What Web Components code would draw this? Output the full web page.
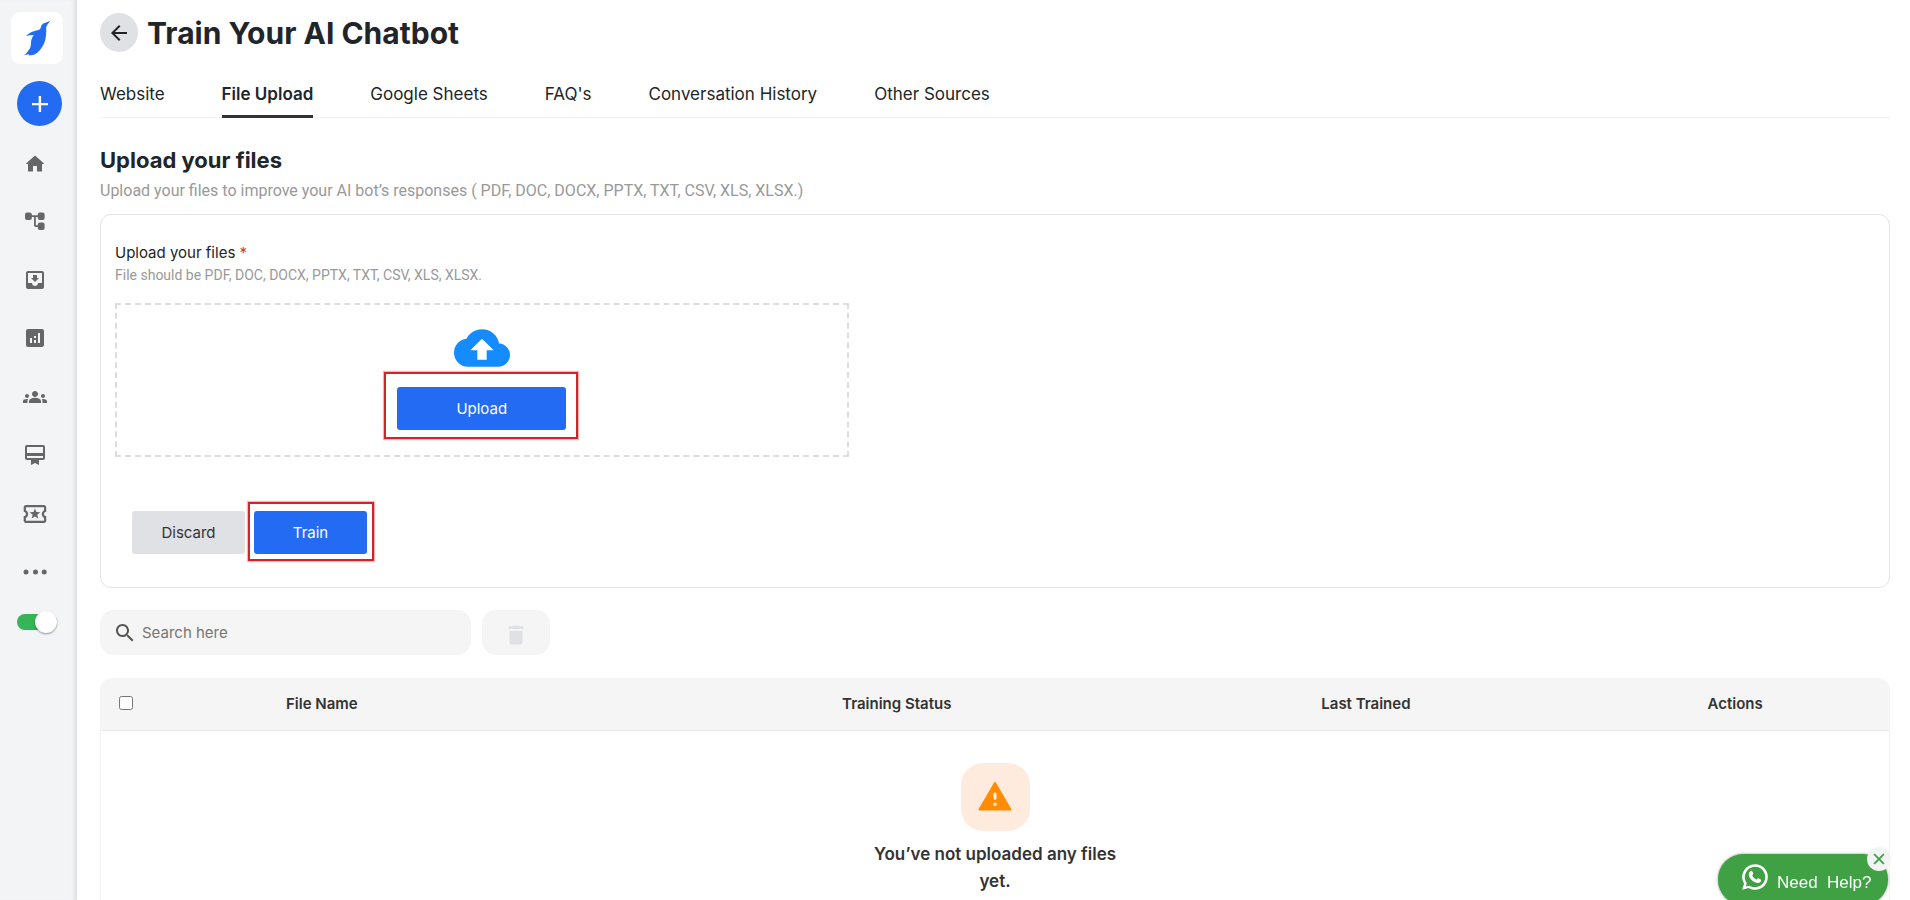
<!DOCTYPE html>
<html lang="en">
<head>
<meta charset="utf-8">
<title>Train Your AI Chatbot</title>
<style>
  html, body { height: 100%; margin: 0; }
  body { font: 15px/20px Inter, "Liberation Sans", sans-serif; color: #212529; background: #fff; overflow: hidden; }
</style>
</head>
<body>
<app-shell>
  <side-bar slot="sidebar"></side-bar>
  <page-header heading="Train Your AI Chatbot"></page-header>
  <tab-bar></tab-bar>
  <section-title heading="Upload your files">Upload your files to improve your AI bot’s responses ( PDF, DOC, DOCX, PPTX, TXT, CSV, XLS, XLSX.)</section-title>
  <upload-card></upload-card>
  <search-row></search-row>
  <files-table></files-table>
</app-shell>
<help-pill></help-pill>

<script>
const ICONS = {
  home: '<path d="M10 20v-5h4v5q0 .5.5.5h4q.5 0 .5-.5v-7h1.500q.8-.2.2-.8L12.600 5q-.6-.6-1.200 0L3.300 12.200q-.6.6.2.8H5v7q0 .5.5.5h4q.5 0 .5-.5z"/>',
  flow: '<rect x="2" y="3.500" width="6.800" height="7.500" rx="2"/><rect x="14.800" y="3.500" width="6.800" height="7.500" rx="2"/><rect x="14.800" y="13.500" width="6.800" height="7.500" rx="2"/><path d="M8 6.300h7v1.700h-2.200v7.500q0 .8.8.8H15V18h-2.200q-1.800 0-1.800-1.800V8H8z"/>',
  inbox: '<path d="M19 3H5c-1.100 0-2 .9-2 2v14c0 1.100.9 2 2 2h14c1.100 0 2-.9 2-2V5c0-1.100-.9-2-2-2zm0 12h-4c0 1.660-1.350 3-3 3s-3-1.340-3-3H5V5h14v10zm-3-5h-2V7h-4v3H8l4 4 4-4z"/>',
  stats: '<path d="M19 3H5c-1.100 0-2 .9-2 2v14c0 1.100.9 2 2 2h14c1.100 0 2-.9 2-2V5c0-1.100-.9-2-2-2zM9 17H7v-5h2v5zm4 0h-2v-3h2v3zm0-5h-2v-2h2v2zm4 5h-2V7h2v10z"/>',
  groups: '<path d="M4 13c1.100 0 2-.9 2-2s-.9-2-2-2-2 .9-2 2 .9 2 2 2zm1.130 1.100c-.37-.06-.74-.1-1.130-.1-.99 0-1.930.21-2.780.58C.48 14.900 0 15.620 0 16.430V18h4.500v-1.610c0-.83.23-1.610.63-2.290zM20 13c1.100 0 2-.9 2-2s-.9-2-2-2-2 .9-2 2 .9 2 2 2zm4 3.430c0-.81-.48-1.530-1.220-1.850-.85-.37-1.790-.58-2.780-.58-.39 0-.76.04-1.130.1.4.68.63 1.460.63 2.290V18H24v-1.570zM16.240 13.650c-1.170-.52-2.610-.9-4.240-.9s-3.070.39-4.240.9C6.680 14.130 6 15.210 6 16.390V18h12v-1.610c0-1.180-.68-2.260-1.760-2.740zM12 6c1.660 0 3 1.340 3 3s-1.340 3-3 3-3-1.340-3-3 1.340-3 3-3z"/>',
  card: '<path d="M20 2H4c-1.110 0-2 .89-2 2v11c0 1.110.89 2 2 2h4v5l4-2 4 2v-5h4c1.110 0 2-.89 2-2V4c0-1.110-.89-2-2-2zm0 13H4v-2h16v2zm0-5H4V4h16v6z"/>',
  ticket: '<g transform="translate(-1.600 -1.500) scale(1.130)"><path d="M22 10V6c0-1.110-.9-2-2-2H4c-1.100 0-1.990.89-1.990 2v4c1.100 0 1.990.9 1.990 2s-.89 2-2 2v4c0 1.100.9 2 2 2h16c1.100 0 2-.9 2-2v-4c-1.100 0-2-.9-2-2s.9-2 2-2zm-2-1.460c-1.190.69-2 1.990-2 3.460s.81 2.770 2 3.460V18H4v-2.540c1.190-.69 2-1.990 2-3.460 0-1.480-.8-2.770-1.990-3.460L4 6h16v2.540zM9.070 16L12 14.120 14.930 16l-.89-3.360 2.690-2.200-3.470-.21L12 7l-1.270 3.220-3.470.21 2.690 2.200z"/></g>',
  more: '<circle cx="3" cy="12" r="2.500"/><circle cx="12.500" cy="12" r="2.500"/><circle cx="21.200" cy="12" r="2.500"/>',
  plus: '<path d="M10.700 4h2.400v6.900H20v2.400h-6.900V20h-2.400v-6.700H4v-2.400h6.700z"/>',
  back: '<path d="M20 11H7.830l5.590-5.590L12 4l-8 8 8 8 1.410-1.410L7.830 13H20v-2z"/>',
  cloud: '<path d="M19.350 10.040C18.670 6.590 15.640 4 12 4 9.110 4 6.600 5.640 5.350 8.040 2.340 8.360 0 10.910 0 14c0 3.310 2.690 6 6 6h13c2.760 0 5-2.240 5-5 0-2.640-2.050-4.780-4.650-4.960zM14 13v4h-4v-4H7l5-5 5 5h-3z"/>',
  search: '<path d="M15.500 14h-.79l-.28-.27C15.410 12.590 16 11.110 16 9.500 16 5.910 13.090 3 9.500 3S3 5.910 3 9.500 5.910 16 9.500 16c1.610 0 3.090-.59 4.230-1.570l.27.28v.79l5 4.990L20.490 19l-4.990-5zm-6 0C7.010 14 5 11.990 5 9.500S7.010 5 9.500 5 14 7.010 14 9.500 11.990 14 9.500 14z"/>',
  trash: '<path d="M5.500 8h13v11.500q0 2-2 2h-9q-2 0-2-2zM9 3.200q0-.8 1-.8h4q1 0 1 .8h3.500q1 0 1 1.400t-1 1.400h-13q-1 0-1-1.400t1-1.400z"/>',
  warning: '<path d="M1.600 21h20.800c.5 0 .8-.5.5-1L12.600 2.300q-.6-.9-1.200 0L1.100 20c-.3.5 0 1 .5 1z"/><path fill="#ffeade" d="M11 10q0-1 1-1t1 1v2.800q0 1-1 1t-1-1zM11 15.900h2v2h-2z"/>',
  close: '<path d="M19 6.410L17.590 5 12 10.590 6.410 5 5 6.410 10.590 12 5 17.590 6.410 19 12 13.410 17.590 19 19 17.590 13.410 12z" stroke="currentColor" stroke-width=".6"/>',
  whatsapp: '<path fill-rule="evenodd" d="M12 1a11 11 0 0 0-9.400 16.700L1 23l5.500-1.500A11 11 0 1 0 12 1zm0 2.200a8.800 8.800 0 1 1-4.800 16.200L4.100 20.200l.9-3A8.800 8.800 0 0 1 12 3.200z"/><path d="M8.300 6.800c.4-.4 1-.3 1.200.1l1 2.200c.2.5-.6 1.300-.9 1.700.8 1.700 2 2.700 3.700 3.500.6-.6 1-1.500 1.500-1.200l2.100 1.100c.7.4.1 1.900-.5 2.400-1.200.9-2.700.7-4.400-.1-2.300-1-4.200-3-5-4.900-.7-1.800-.3-3.700 1.300-4.800z"/>'
};

const define = (name, css, html) => customElements.define(name, class extends HTMLElement {
  constructor() {
    super();
    const markup = typeof html === 'function' ? html(this) : html;
    this.attachShadow({ mode: 'open' }).innerHTML =
      `<style>*,*::before{box-sizing:border-box}${css}</style>${markup}`;
  }
});

define('ui-icon',
  `:host{display:block;flex:none;width:24px;height:24px}
   svg{display:block;width:100%;height:100%;fill:currentColor;overflow:visible}`,
  el => `<svg viewBox="0 0 24 24" aria-hidden="true">${ICONS[el.getAttribute('name')]}</svg>`);

define('ui-button',
  `:host{display:block;position:relative;width:113px;height:43px}
   button{width:100%;height:100%;border:0;border-radius:3px;background:#e0e1e5;color:#333;font:inherit;cursor:pointer}
   :host([primary]) button{background:#236bf3;color:#fff}
   :host([marked])::after{content:"";position:absolute;inset:var(--mark-inset);border:2px solid #d32228;box-shadow:0 0 1px 1px #f6b4b6}`,
  `<button type="button"><slot></slot></button>`);

define('app-shell',
  `:host{display:grid;grid-template-columns:77px minmax(0,1fr);height:100vh;overflow:hidden}
   main{padding:13px 20px 0 23px;min-width:0;overflow:hidden}`,
  `<slot name="sidebar"></slot><main><slot></slot></main>`);

define('side-bar',
  `:host{display:flex;flex-direction:column;align-items:flex-start;padding:12px 0 0 11px;background:#f2f4f6;box-shadow:inset -5px 0 4px -3px #d9dbde}
   .logo{display:block;width:52px;height:52px;border-radius:9px;background:#fff}
   .logo svg{display:block}
   .add{display:grid;place-items:center;width:45px;height:45px;margin:17px 0 0 6px;padding:0;border:0;border-radius:50%;background:#236bf3;color:#fff}
   nav{display:flex;flex-direction:column;justify-content:space-between;height:433px;margin:25px 0 0 12px}
   a{display:block;color:#666}
   .toggle{appearance:none;position:relative;width:40px;height:16px;margin:30px 0 0 6px;border-radius:8px;background:#36b558}
   .toggle::before{content:"";position:absolute;right:0;top:-3px;width:22px;height:22px;border-radius:50%;background:#fff;box-shadow:0 1px 2px #0006}`,
  `<a class="logo" href="#" aria-label="Dashboard"><svg viewBox="0 0 52 52" width="52" height="52" fill="#236bf3"><path d="M39.300 9l-5.800 1.900c-1.800.7-3 1.900-3.300 3.400l-1 2.700c-1.500 1-3.500 1.400-5.500 2.100-3.200 1-6 2.300-8.700 4.900 3-.8 5.500-1.200 7.800-1-1.800 2.400-2.600 4.800-2.800 7.300 0 4-.8 6.500-2.600 8.300-1 1.600-2.300 3.300-4.400 4.400l5.500-.8-.8 1.300 5.300-.8c2.500-1 4.600-3 6.700-5.800 3-4 4.800-8 5.100-12.200.4-3 .6-5.600.4-8.200-.1-2 .7-3.300 1.700-4.500z"/></svg></a>
   <button class="add" type="button" aria-label="Add"><ui-icon name="plus"></ui-icon></button>
   <nav>${[['home','Home'],['flow','Flows'],['inbox','Inbox'],['stats','Analytics'],['groups','Audience'],['card','Plans'],['ticket','Tickets'],['more','More']]
     .map(([i, t]) => `<a href="#" aria-label="${t}"><ui-icon name="${i}"></ui-icon></a>`).join('')}</nav>
   <input class="toggle" type="checkbox" role="switch" checked aria-label="Bot status">`);

define('page-header',
  `:host{display:flex;align-items:center;gap:9px;height:39px}
   button{display:grid;place-items:center;width:38px;height:39px;padding:0;border:0;border-radius:50%;background:#e0e1e5;color:#212529}
   h1{margin:0;padding-top:2px;font-size:30px;line-height:39px;font-weight:700}`,
  el => `<button type="button" aria-label="Back"><ui-icon name="back"></ui-icon></button><h1>${el.getAttribute('heading')}</h1>`);

define('tab-bar',
  `:host{display:flex;gap:57px;margin-top:25px;border-bottom:1px solid #f1f1f1;font-size:17px;line-height:34px}
   a{color:inherit;text-decoration:none;height:40px;white-space:nowrap}
   a[aria-current]{font-weight:600;height:41px;margin-bottom:-1px;border-bottom:3px solid #333}`,
  ['Website', 'File Upload', 'Google Sheets', "FAQ's", 'Conversation History', 'Other Sources']
    .map(t => `<a href="#"${t === 'File Upload' ? ' aria-current="page"' : ''}>${t}</a>`).join(''));

define('section-title',
  `:host{display:block;margin-top:26px}
   h2{margin:0;font-size:22px;line-height:32px;font-weight:700}
   p{margin:3px 0 0;font:16px/24px Roboto,sans-serif;color:#999}`,
  el => `<h2>${el.getAttribute('heading')}</h2><p><slot></slot></p>`);

define('upload-card',
  `:host{display:block;margin-top:11px;padding:28px 15px 33px 14px;border:1px solid #e4e4e4;border-radius:11px}
   label{display:block;line-height:20px}
   label span{color:#d0343a}
   p{margin:2px 0 18px;font:14px/20px Roboto,sans-serif;color:#999}
   .drop{display:flex;flex-direction:column;align-items:center;gap:11px;width:41.700%;padding:15px 0 25px;border:2px dashed #ddd}
   .drop input{display:none}
   .drop ui-icon{width:56px;height:56px;color:#148cff}
   .drop ui-button{width:169px;--mark-inset:-15px -12px -9px -13px}
   .actions{display:flex;gap:9px;margin:54px 0 0 17px}
   .actions ui-button{--mark-inset:-9px -7px -7px -6px}`,
  `<label for="file">Upload your files <span>*</span></label>
   <p>File should be PDF, DOC, DOCX, PPTX, TXT, CSV, XLS, XLSX.</p>
   <div class="drop"><input id="file" type="file"><ui-icon name="cloud"></ui-icon><ui-button primary marked>Upload</ui-button></div>
   <div class="actions"><ui-button>Discard</ui-button><ui-button primary marked>Train</ui-button></div>`);

define('search-row',
  `:host{display:flex;gap:11px;margin-top:22px}
   label{display:flex;align-items:center;gap:5px;width:371px;height:45px;padding:0 13px;border-radius:14px;background:#f5f5f5;color:#555}
   input{flex:1;min-width:0;padding:0;border:0;outline:0;background:none;font:inherit;color:#333}
   input::placeholder{color:#757575;opacity:1}
   button{display:grid;place-items:center;width:68px;height:45px;padding:4px 0 0;border:0;border-radius:14px;background:#f5f5f5;color:#e0e1e5}`,
  `<label><ui-icon name="search"></ui-icon><input type="search" placeholder="Search here" aria-label="Search here"></label>
   <button type="button" disabled aria-label="Delete selected"><ui-icon name="trash"></ui-icon></button>`);

define('files-table',
  `:host{display:block;margin-top:23px;border:1px solid #f4f4f4;border-radius:12px 12px 0 0;overflow:hidden}
   table{width:100%;table-layout:fixed;border-collapse:collapse;color:#333}
   th{height:51px;padding:0;background:#f5f5f5;border-bottom:1px solid #e6e6e6;text-align:left;font-weight:600}
   th:nth-child(1){width:10.350%;padding:0 0 2px 18px}
   th:nth-child(2){width:31.100%}
   th:nth-child(3){width:26.800%}
   th:nth-child(4){width:21.600%}
   th input{display:block;width:14px;height:14px;margin:0}
   td{padding:32px 0 40px}
   .tile{display:grid;place-items:center;width:69px;height:68px;margin:0 auto 10px;border-radius:22px;background:#ffeade;color:#ff8c05}
   .tile ui-icon{width:36px;height:36px}
   .note{width:260px;margin:0 auto;font-size:17px;line-height:27px;font-weight:600;text-align:center}`,
  `<table><thead><tr><th><input type="checkbox" aria-label="Select all files"></th><th>File Name</th><th>Training Status</th><th>Last Trained</th><th>Actions</th></tr></thead>
   <tbody><tr><td colspan="5"><div class="tile"><ui-icon name="warning"></ui-icon></div><div class="note">You’ve not uploaded any files yet.</div></td></tr></tbody></table>`);

define('help-pill',
  `:host{position:fixed;right:22px;bottom:-5px}
   .open{display:flex;gap:8px;width:170px;height:51px;padding:9px 0 0 23px;border:0;border-radius:25px;background:#3fa044;color:#fff;font:17px/20px "Liberation Sans",sans-serif;box-shadow:0 0 3px #0006;white-space:pre}
   .open ui-icon{width:28px;height:28px}
   .open span{padding-top:10px}
   .close{position:absolute;right:-3px;top:-7px;display:grid;place-items:center;width:24px;height:24px;padding:0;border:0;border-radius:50%;background:#f1f3f5;color:#3fa044}
   .close ui-icon{width:18px;height:18px}`,
  `<button class="open" type="button"><ui-icon name="whatsapp"></ui-icon><span>Need  Help?</span></button>
   <button class="close" type="button" aria-label="Dismiss"><ui-icon name="close"></ui-icon></button>`);
</script>
</body>
</html>
